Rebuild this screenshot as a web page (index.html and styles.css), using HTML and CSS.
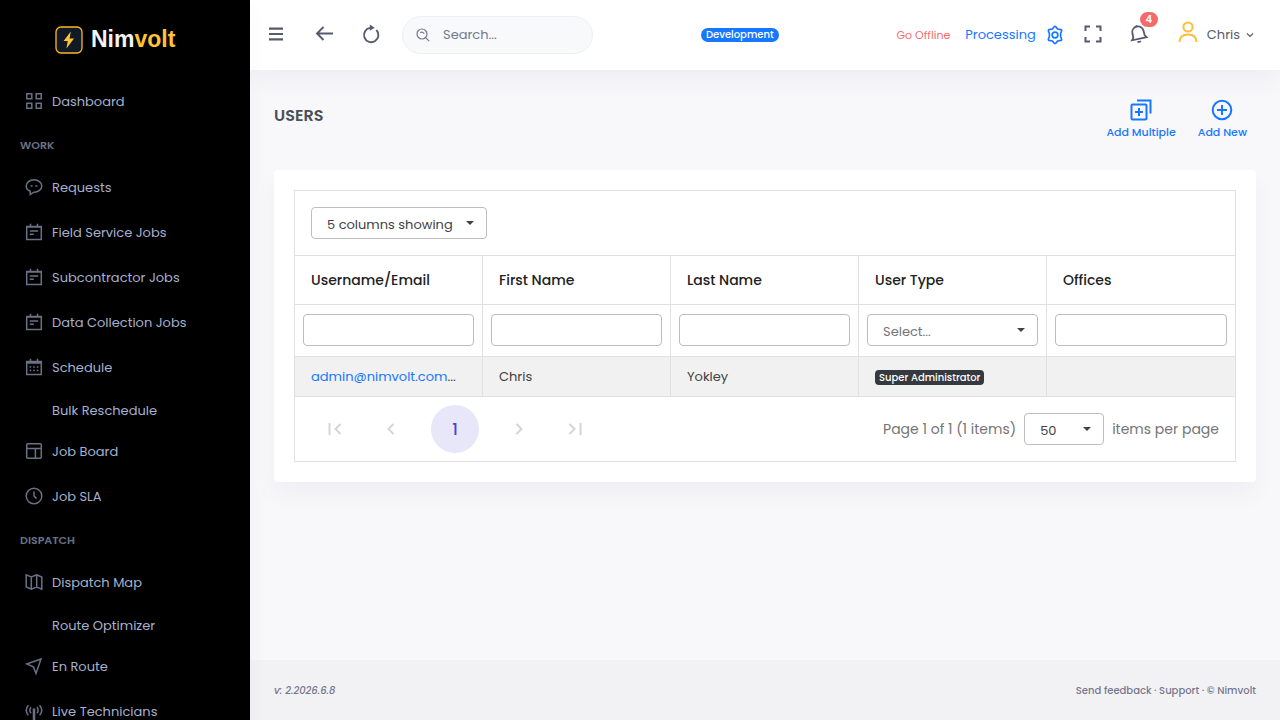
FILE: index.html
```html
<!DOCTYPE html>
<html lang="en">
<head>
    <meta charset="utf-8">
    <meta name="viewport" content="width=device-width, initial-scale=1.0">
    <title>Users | Nimvolt</title>
    <link rel="stylesheet" href="styles.css">
</head>
<body>
    <aside class="sidebar">
        <a class="logo" href="#" aria-label="Nimvolt">
            <svg width="28" height="28" viewBox="0 0 28 28">
                <rect x="1" y="1" width="26" height="26" rx="5" fill="#101a24" stroke="#fbb829" stroke-width="1.3"/>
                <path d="M15.8 5.5L8.6 15h4.2l-1.4 7.4 7.6-10h-4.4z" fill="#ffc436"/>
            </svg>
            <span class="logo-text">Nim<span class="logo-accent">volt</span></span>
        </a>
        <nav>
            <ul class="menu">
                <li><a class="menu-link" href="#">
                    <svg class="icon" viewBox="0 0 18 18"><path d="M1.800 1.800h5v5h-5zM11.200 1.800h5v5h-5zM1.800 11.200h5v5h-5zM11.200 11.200h5v5h-5z"/></svg>
                    Dashboard</a></li>
                <li class="menu-title">WORK</li>
                <li><a class="menu-link" href="#">
                    <svg class="icon" viewBox="0 0 18 18"><path d="M5.200 13.200C2.800 12.200 1.200 10.300 1.200 8 1.200 4.600 4.700 1.800 9 1.800s7.800 2.800 7.800 6.200-3.500 6.200-7.800 6.200L5.200 16.400z"/><path d="M5.600 7.200h2v1.600h-2zM10.400 7.200h2v1.600h-2z" class="filled"/></svg>
                    Requests</a></li>
                <li><a class="menu-link" href="#">
                    <svg class="icon" viewBox="0 0 18 18"><path d="M1.700 3.400h14.600v13H1.700zM5.500.8v3M12.500.8v3M1.700 3.900h14.600M4.800 7.900h8.400M4.800 11.200h4"/></svg>
                    Field Service Jobs</a></li>
                <li><a class="menu-link" href="#">
                    <svg class="icon" viewBox="0 0 18 18"><path d="M1.700 3.400h14.600v13H1.700zM5.500.8v3M12.500.8v3M1.700 3.900h14.600M4.800 7.900h8.400M4.800 11.200h4"/></svg>
                    Subcontractor Jobs</a></li>
                <li><a class="menu-link" href="#">
                    <svg class="icon" viewBox="0 0 18 18"><path d="M1.700 3.400h14.600v13H1.700zM5.500.8v3M12.500.8v3M1.700 3.900h14.600M4.800 7.900h8.400M4.800 11.200h4"/></svg>
                    Data Collection Jobs</a></li>
                <li><a class="menu-link" href="#">
                    <svg class="icon" viewBox="0 0 18 18"><path d="M1.700 3.400h14.600v13H1.700zM5.500.8v3M12.500.8v3M1.700 4.200h14.600M1.700 5h14.600M4.600 9h1.600M8.200 9h1.600M11.800 9h1.600M4.600 12.600h1.600M8.200 12.600h1.600M11.800 12.600h1.600"/></svg>
                    Schedule</a></li>
                <li><a class="menu-link menu-sub" href="#">Bulk Reschedule</a></li>
                <li><a class="menu-link" href="#">
                    <svg class="icon" viewBox="0 0 18 18"><rect x="1.700" y="1.700" width="14.600" height="14.600" rx="1"/><path d="M1.700 6.600h14.600M10.400 6.600v9.700"/></svg>
                    Job Board</a></li>
                <li><a class="menu-link" href="#">
                    <svg class="icon" viewBox="0 0 18 18"><circle cx="9" cy="9" r="7.800"/><path d="M9 4.600V9l2.600 2.600"/></svg>
                    Job SLA</a></li>
                <li class="menu-title">DISPATCH</li>
                <li><a class="menu-link" href="#">
                    <svg class="icon" viewBox="0 0 18 18"><path d="M1.200 1.900L6.300 4l5.400-2.100 5.100 2.100v12.100l-5.100-2.100-5.400 2.100-5.100-2.100zM6.300 4v12.100M11.700 1.900V14"/></svg>
                    Dispatch Map</a></li>
                <li><a class="menu-link menu-sub" href="#">Route Optimizer</a></li>
                <li><a class="menu-link" href="#">
                    <svg class="icon" viewBox="0 0 18 18"><path d="M16 2L1.700 7l6.700 2.700L11 16.500z"/></svg>
                    En Route</a></li>
                <li><a class="menu-link" href="#">
                    <svg class="icon" viewBox="0 0 18 18"><path d="M3.400 3.200c-2.600 3-2.600 7 0 10M14.600 3.200c2.600 3 2.600 7 0 10M6 5.200c-1.400 2-1.400 4.200 0 6M12 5.200c1.400 2 1.400 4.200 0 6"/><circle cx="9" cy="7.500" r="1.300" class="filled"/><path d="M9 8v10" class="bold"/></svg>
                    Live Technicians</a></li>
            </ul>
        </nav>
    </aside>

    <div class="main">
        <header class="topbar">
            <div class="topbar-left">
                <button class="icon-btn" aria-label="Menu">
                    <svg width="18" height="18" viewBox="0 0 18 18"><path d="M2 3.700h14M2 9h14M2 14.300h14" stroke-width="2.200"/></svg>
                </button>
                <button class="icon-btn" aria-label="Back">
                    <svg width="20" height="20" viewBox="0 0 20 20"><path d="M19 9.500H3M9.500 3L3 9.500 9.500 16" stroke-width="1.900"/></svg>
                </button>
                <button class="icon-btn" aria-label="Reload">
                    <svg width="20" height="20" viewBox="0 0 20 20"><path d="M14.400 6A7.200 7.200 0 1 1 8 3.900" stroke-width="1.900"/><path d="M7.800.6l4.900 3.100-4.900 3.100z" class="filled"/></svg>
                </button>
                <label class="search">
                    <svg width="14" height="14" viewBox="0 0 14 14"><circle cx="6" cy="6" r="5"/><path d="M9.800 9.800l3.400 3.400M4.200 4.800c1.600-1.200 3.400-.6 4 1"/></svg>
                    <input type="search" placeholder="Search..." aria-label="Search">
                </label>
            </div>
            <span class="env-badge">Development</span>
            <div class="topbar-right">
                <a class="offline" href="#">Go Offline</a>
                <a class="processing" href="#">Processing
                    <svg width="20" height="20" viewBox="0 0 24 24"><path d="M12 1.600c1.500 0 2 2.500 3.300 3.200s3.800-.1 4.600 1.200-1.200 3-1.200 4.600v2.800c0 1.600 1.900 3.300 1.200 4.600s-3.300.5-4.600 1.200-1.800 3.200-3.300 3.200-2-2.500-3.300-3.200-3.800.1-4.600-1.200 1.200-3 1.200-4.600v-2.800C5.300 9 3.400 7.300 4.100 6s3.300-.5 4.600-1.200S10.500 1.600 12 1.600z" stroke-linejoin="round"/><circle cx="12" cy="12" r="3.400"/></svg>
                </a>
                <button class="icon-btn" aria-label="Fullscreen">
                    <svg width="18" height="18" viewBox="0 0 18 18"><path d="M1.500 6V1.500H6M12 1.500h4.500V6M16.500 12v4.500H12M6 16.500H1.500V12" stroke-width="2"/></svg>
                </button>
                <button class="icon-btn bell" aria-label="Notifications">
                    <svg width="20" height="20" viewBox="0 0 20 20"><path d="M3 16.300l1.300-2.600-.9-4.400C2.700 6 4.800 3.200 7.800 2.500c3-.7 6 1.200 6.800 4.500l1 4.100 2.100 2.100z" stroke-width="1.800"/><path d="M7.500 2.500l-.3-1.200"/><path d="M8.500 17.500c1 .8 2.600.5 3.200-.7" stroke-width="1.800"/></svg>
                    <span class="bell-count">4</span>
                </button>
                <button class="user">
                    <svg class="avatar" width="20" height="22" viewBox="0 0 20 22"><circle cx="10" cy="6" r="4.600"/><path d="M1.500 21c0-5 3.200-7.500 8.500-7.500s8.500 2.500 8.500 7.500"/></svg>
                    Chris
                    <svg class="chevron" width="8" height="8" viewBox="0 0 8 8"><path d="M1 2.500l3 3 3-3"/></svg>
                </button>
            </div>
        </header>

        <main class="content">
            <div class="page-head">
                <h1>USERS</h1>
                <div class="actions">
                    <a class="action" href="#">
                        <svg width="24" height="24" viewBox="0 0 24 24"><rect x="2.500" y="6.500" width="15" height="15" rx="1"/><path d="M10 10v8M6 14h8M8 2.500h13.500v13"/></svg>
                        Add Multiple
                    </a>
                    <a class="action" href="#">
                        <svg width="24" height="24" viewBox="0 0 24 24"><circle cx="12" cy="12" r="9.300"/><path d="M12 7v10M7 12h10"/></svg>
                        Add New
                    </a>
                </div>
            </div>

            <div class="card">
                <div class="grid">
                    <div class="grid-toolbar">
                        <span class="select columns-select">
                            <select aria-label="Columns"><option>5 columns showing</option></select>
                        </span>
                    </div>
                    <table class="users-table">
                        <thead>
                            <tr class="head-row">
                                <th>Username/Email</th>
                                <th>First Name</th>
                                <th>Last Name</th>
                                <th>User Type</th>
                                <th>Offices</th>
                            </tr>
                            <tr class="filter-row">
                                <td><input type="text" aria-label="Filter username"></td>
                                <td><input type="text" aria-label="Filter first name"></td>
                                <td><input type="text" aria-label="Filter last name"></td>
                                <td><span class="select placeholder"><select aria-label="Filter user type"><option>Select...</option></select></span></td>
                                <td><input type="text" aria-label="Filter offices"></td>
                            </tr>
                        </thead>
                        <tbody>
                            <tr class="data-row">
                                <td><a href="#">admin@nimvolt.com</a>...</td>
                                <td>Chris</td>
                                <td>Yokley</td>
                                <td><span class="type-badge">Super Administrator</span></td>
                                <td></td>
                            </tr>
                        </tbody>
                    </table>
                    <div class="pager">
                        <div class="pages">
                            <button aria-label="First page" disabled><svg width="16" height="16" viewBox="0 0 16 16"><path d="M2.500 2v12M13.500 3l-5 5 5 5"/></svg></button>
                            <button aria-label="Previous page" disabled><svg width="16" height="16" viewBox="0 0 16 16"><path d="M10.500 3l-5 5 5 5"/></svg></button>
                            <button class="current">1</button>
                            <button aria-label="Next page" disabled><svg width="16" height="16" viewBox="0 0 16 16"><path d="M5.500 3l5 5-5 5"/></svg></button>
                            <button aria-label="Last page" disabled><svg width="16" height="16" viewBox="0 0 16 16"><path d="M2.500 3l5 5-5 5M13.500 2v12"/></svg></button>
                        </div>
                        <div class="page-info">
                            <span>Page 1 of 1 (1 items)</span>
                            <span class="select size-select"><select id="page-size"><option>50</option></select></span>
                            <label for="page-size">items per page</label>
                        </div>
                    </div>
                </div>
            </div>
        </main>

        <footer class="footer">
            <em>v: 2.2026.6.8</em>
            <span><a href="#">Send feedback</a> · <a href="#">Support</a> · © Nimvolt</span>
        </footer>
    </div>
</body>
</html>
```
FILE: styles.css
```css
* {
    box-sizing: border-box;
}
body {
    margin: 0;
    height: 100vh;
    display: flex;
    overflow: hidden;
    background-color: #f8f8fb;
    color: #495057;
    font-family: Poppins, Inter, sans-serif;
    font-size: 13px;
}
a {
    color: inherit;
    text-decoration: none;
}
button, input, select {
    font: inherit;
    color: inherit;
}
button {
    padding: 0;
    border: none;
    background: none;
    cursor: pointer;
}
svg {
    display: block;
    flex-shrink: 0;
    fill: none;
    stroke: currentColor;
    stroke-width: 1.5;
}
svg .filled {
    fill: currentColor;
    stroke: none;
}
svg .bold {
    stroke-width: 2.5;
}

/* Sidebar */
.sidebar {
    width: 250px;
    flex-shrink: 0;
    background-color: #000;
    overflow: hidden;
    box-shadow: 0 12px 24px rgba(18, 38, 63, 0.03);
    z-index: 2;
}
.logo {
    display: flex;
    align-items: center;
    gap: 8px;
    height: 79px;
    padding-left: 55px;
}
.logo-text {
    font-family: "Liberation Sans", Arial, sans-serif;
    font-size: 23px;
    font-weight: 700;
    color: #f1f3f5;
}
.logo-accent {
    color: #ffc436;
}
.logo svg {
    stroke: none;
}
.menu {
    list-style: none;
    margin: 0;
    padding: 0;
}
.menu-link {
    display: flex;
    align-items: center;
    gap: 9px;
    height: 45px;
    padding-left: 25px;
    color: #a6b0cf;
}
.menu-sub {
    height: 39px;
    padding-top: 2px;
    padding-left: 52px;
}
.menu-title {
    height: 41px;
    padding: 2px 0 0 20px;
    line-height: 39px;
    font-size: 11px;
    font-weight: 600;
    color: #6a7187;
}
.icon {
    width: 18px;
    height: 18px;
    margin-bottom: 2px;
    color: #6a7187;
}

/* Top bar */
.main {
    flex: 1;
    min-width: 0;
    display: flex;
    flex-direction: column;
}
.topbar {
    display: flex;
    align-items: center;
    justify-content: space-between;
    height: 70px;
    flex-shrink: 0;
    padding: 0 26px 0 16px;
    background-color: #fff;
    color: #555b6d;
    box-shadow: 0 12px 24px rgba(18, 38, 63, 0.04);
    z-index: 1;
}
.topbar-left, .topbar-right {
    display: flex;
    align-items: center;
}
.topbar-left {
    gap: 28px;
}
.icon-btn {
    display: grid;
    place-items: center;
    width: 20px;
    height: 22px;
    padding-bottom: 2px;
}
.search {
    display: flex;
    align-items: center;
    gap: 13px;
    width: 191px;
    height: 38px;
    margin-left: -8px;
    padding: 0 13px;
    border: 1px solid #eef0f4;
    border-radius: 19px;
    background-color: #f7f9fb;
    color: #74788d;
}
.search svg {
    stroke-width: 1.2;
}
.search input {
    min-width: 0;
    width: 100%;
    padding: 0;
    border: none;
    outline: none;
    background: none;
}
.search input::placeholder {
    color: #74788d;
    opacity: 1;
}
.env-badge {
    height: 14px;
    margin-right: 10px;
    padding: 0 5px;
    border-radius: 7px;
    background-color: #1677ff;
    color: #fff;
    font-size: 10px;
    font-weight: 500;
    line-height: 14px;
}
.topbar-right {
    gap: 18px;
}
.offline {
    margin-right: -3px;
    color: #f46a6a;
    font-size: 11px;
}
.processing {
    display: flex;
    align-items: center;
    gap: 9px;
    color: #1677ff;
}
.processing svg {
    stroke-width: 2;
}
.bell {
    position: relative;
    margin: 0 11px 0 8px;
}
.bell-count {
    position: absolute;
    left: 11px;
    top: -12px;
    width: 18px;
    height: 15px;
    border-radius: 8px;
    background-color: #f46a6a;
    color: #fff;
    font-size: 10px;
    font-weight: 600;
    line-height: 15px;
}
.user {
    display: flex;
    align-items: center;
    gap: 9px;
}
.user .avatar {
    margin-bottom: 6px;
    color: #fbbf38;
    stroke-width: 2;
}
.user .chevron {
    margin-left: -3px;
    stroke-width: 1.2;
}

/* Page */
.content {
    flex: 1;
    padding: 24px;
}
.page-head {
    display: flex;
    justify-content: space-between;
    height: 76px;
}
h1 {
    margin: 0;
    font-size: 16px;
    font-weight: 600;
    line-height: 43px;
}
.actions {
    display: flex;
    gap: 22px;
    padding: 4px 9px 0 0;
}
.action {
    display: flex;
    flex-direction: column;
    align-items: center;
    gap: 2px;
    color: #1677ff;
    font-size: 11px;
    font-weight: 500;
    line-height: 16px;
}
.action svg {
    stroke-width: 2;
}
.card {
    padding: 20px;
    border-radius: 4px;
    background-color: #fff;
    box-shadow: 0 12px 24px rgba(18, 38, 63, 0.04);
}
.grid {
    border: 1px solid #e0e0e0;
}
.grid-toolbar {
    padding: 16px;
}
.select {
    position: relative;
    display: block;
    height: 32px;
}
.select select {
    appearance: none;
    width: 100%;
    height: 32px;
    padding: 2px 15px 0;
    border: 1px solid #bdbdbd;
    border-radius: 4px;
    background-color: #fff;
    color: #424242;
    font-size: 13px;
}
/* dropdown caret */
.select::after {
    content: "";
    position: absolute;
    right: 13px;
    top: 14px;
    border: solid transparent;
    border-width: 4px 4px 0;
    border-top-color: #424242;
    pointer-events: none;
}
.select.placeholder select {
    color: #757575;
}
.columns-select {
    width: 176px;
}
.size-select {
    width: 80px;
}
.users-table {
    width: 100%;
    table-layout: fixed;
    border-collapse: separate;
    border-spacing: 0;
}
.users-table th, .users-table td {
    padding: 0 16px;
    border-top: 1px solid #e0e0e0;
    border-right: 1px solid #e0e0e0;
    text-align: left;
}
.users-table th:last-child, .users-table td:last-child {
    border-right: none;
}
.users-table th {
    height: 49px;
    color: #212121;
    font-size: 14px;
    font-weight: 500;
}
.users-table .filter-row td {
    height: 52px;
    padding: 0 8px 1px;
}
.filter-row input {
    display: block;
    width: 100%;
    height: 32px;
    padding: 0 12px;
    border: 1px solid #bdbdbd;
    border-radius: 4px;
}
.data-row td {
    height: 40px;
    background-color: #f1f1f1;
    color: #424242;
    white-space: nowrap;
}
.data-row a {
    color: #1677ff;
}
.type-badge {
    display: inline-block;
    padding: 0 4px;
    border-radius: 4px;
    background-color: #343a40;
    color: #fff;
    font-size: 10px;
    font-weight: 500;
    line-height: 15px;
}
.pager {
    display: flex;
    align-items: center;
    justify-content: space-between;
    height: 65px;
    padding: 0 16px;
    border-top: 1px solid #e0e0e0;
}
.pages {
    display: flex;
    align-items: center;
    gap: 8px;
}
.pages button {
    display: grid;
    place-items: center;
    width: 48px;
    height: 48px;
    border-radius: 50%;
    color: #d5d5d5;
}
.pages svg {
    stroke-width: 2;
}
.pages .current {
    margin: 0 8px;
    background-color: #e8e6f9;
    color: #4b43cf;
    font-size: 16px;
    font-weight: 500;
}
.page-info {
    display: flex;
    align-items: center;
    gap: 8px;
    color: #757575;
    font-size: 14px;
}
.footer {
    display: flex;
    align-items: center;
    justify-content: space-between;
    height: 60px;
    flex-shrink: 0;
    padding: 2px 24px 0;
    background-color: #f2f2f5;
    color: #74788d;
    font-size: 10px;
    font-weight: 500;
}
```
